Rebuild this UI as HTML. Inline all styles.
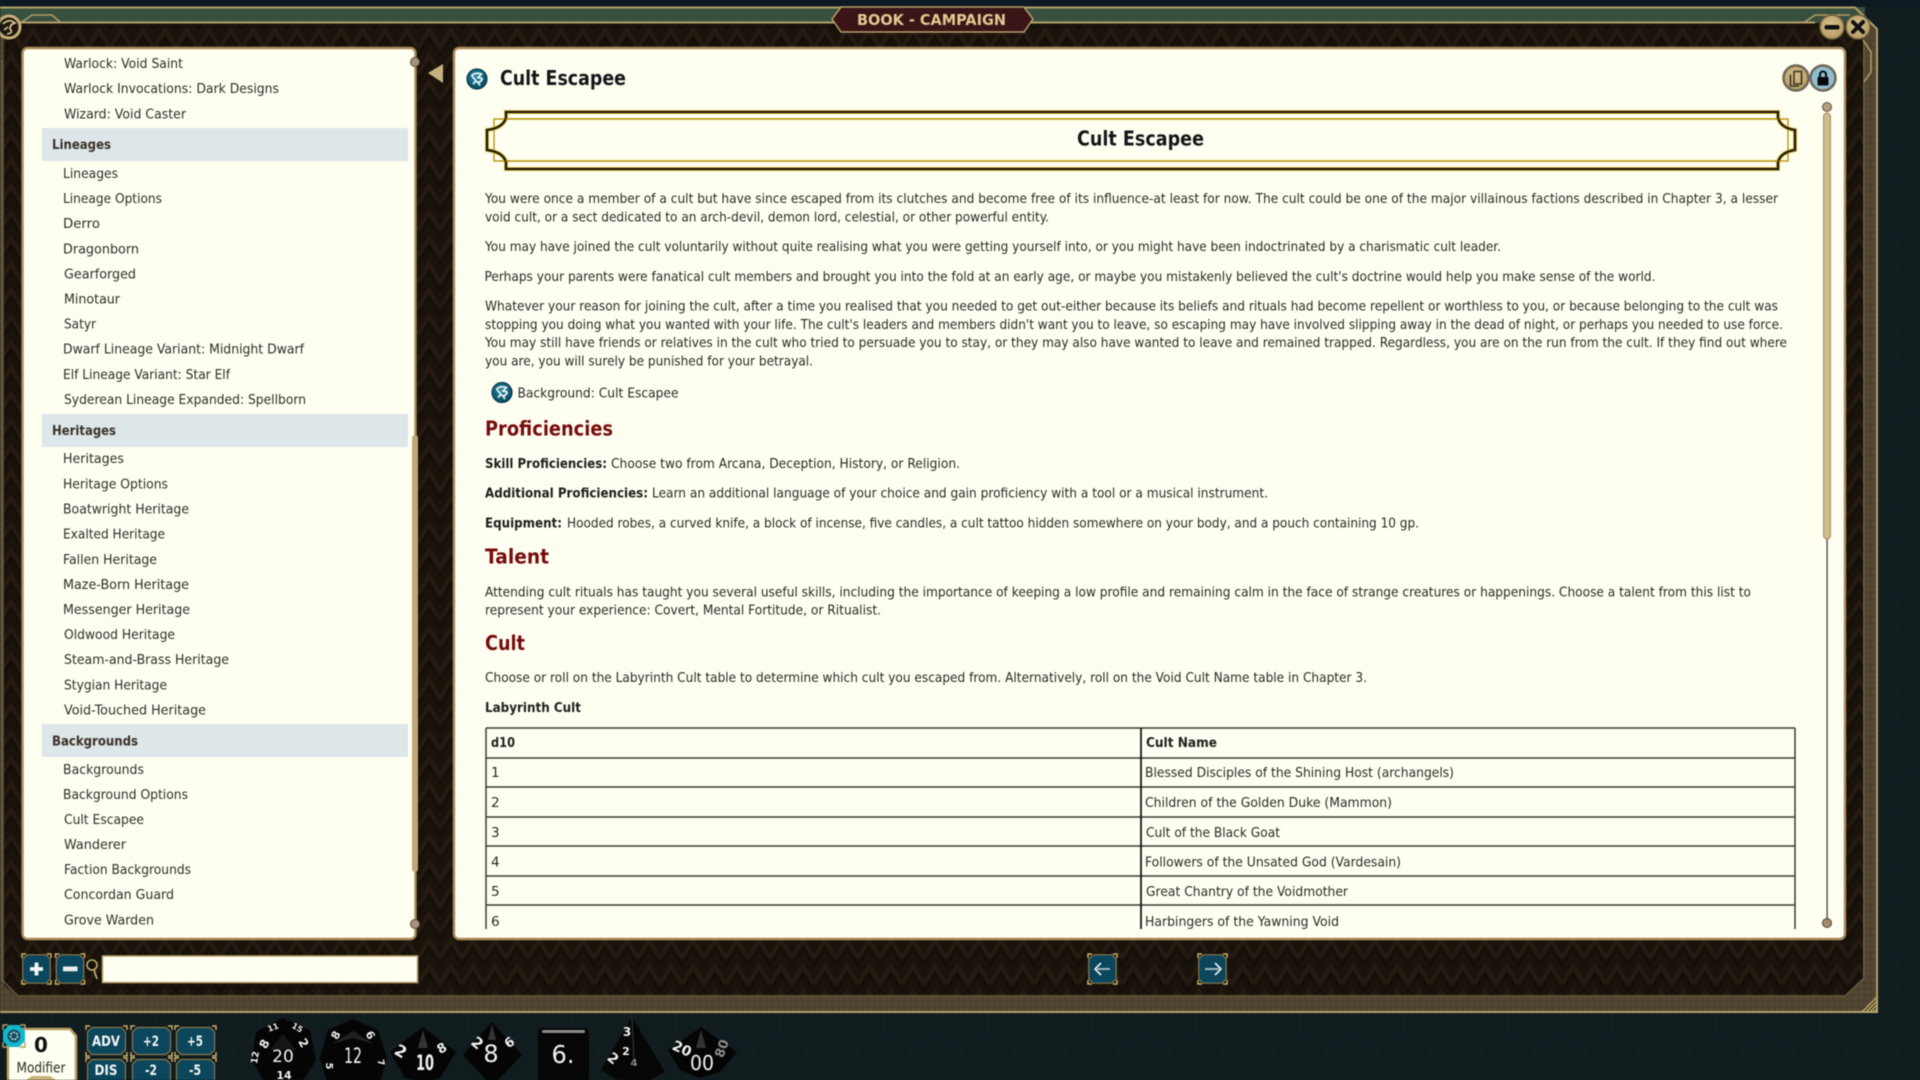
<!DOCTYPE html>
<html><head><meta charset="utf-8"><title>Book - Campaign</title>
<style>
html,body{margin:0;padding:0;background:#111c1f;width:1920px;height:1080px;overflow:hidden}
svg{display:block;filter:blur(.42px)}
text{font-family:"DejaVu Sans","Liberation Sans",sans-serif}
.i{font-size:13.7px;fill:#2f2d29}
.h{font-size:13.7px;font-weight:bold;fill:#3a3028}
.p{font-size:13.6px;fill:#2a2a26}
.b{font-size:13.6px;font-weight:bold;fill:#1e1e1c}
.r{font-size:20px;font-weight:bold;fill:#760c0c}
.w{font-weight:bold;fill:#f4f6f4;font-size:14px;text-anchor:middle}
.d{fill:#f2f2f2;text-anchor:middle;font-weight:bold}
</style></head><body>
<svg width="1920" height="1080" viewBox="0 0 1920 1080" xmlns="http://www.w3.org/2000/svg">
<defs>
<pattern id="hex" width="52" height="90" patternUnits="userSpaceOnUse">
<path d="M0 15L26 0L52 15V45L26 60V90M26 60L0 45V15M52 45L26 60" fill="none" stroke="#16222a" stroke-opacity=".7" stroke-width="1.1"/>
</pattern>
<pattern id="herr" width="22" height="26" patternUnits="userSpaceOnUse">
<rect width="22" height="26" fill="#19130c"/>
<path d="M0 22L11 4L22 22" fill="none" stroke="#241a10" stroke-width="4"/>
<path d="M0 30L11 12L22 30M0 4L11 -14L22 4" fill="none" stroke="#140f09" stroke-width="3"/>
</pattern>
<pattern id="tan" width="6" height="6" patternUnits="userSpaceOnUse">
<rect width="6" height="6" fill="#4e4430"/>
<circle cx="1.5" cy="2" r="1" fill="#5c5139"/><circle cx="4.5" cy="5" r="1" fill="#453b29"/>
</pattern>
<radialGradient id="teal" cx=".45" cy=".4" r=".6"><stop offset="0" stop-color="#2a8fa8"/><stop offset="1" stop-color="#07465c"/></radialGradient>
<radialGradient id="gold" cx=".45" cy=".4" r=".6"><stop offset="0" stop-color="#d4bf8c"/><stop offset="1" stop-color="#b89d63"/></radialGradient>
<g id="b29">
<path d="M5 1H24L28 5V25L24 29H5L1 25V5Z" fill="#0b465c"/>
<path d="M5 .8H24L28.2 5V25L24 29.2H5L.8 25V5Z" fill="none" stroke="#8a7a4e" stroke-width="1.2"/>
<path d="M0 4V0H4M25 0H29V4M29 26V30H25M4 30H0V26" fill="none" stroke="#cdb26c" stroke-width="1.5"/>
</g>
<g id="b41">
<path d="M6 1.5H35L39.5 6V24L35 28.5H6L1.5 24V6Z" fill="#0b465c" stroke="#8a7a4e" stroke-width="1.2"/>
<path d="M0 4V0H4M37 0H41V4M41 26V30H37M4 30H0V26" fill="none" stroke="#cdb26c" stroke-width="1.4"/>
</g>
<g id="logo">
<circle r="10" fill="url(#teal)"/><circle r="10" fill="none" stroke="#0a3d50" stroke-width="1.2"/>
<path d="M-5.5 -3.5Q-1 -7 4.5 -5L1 -1.5L5.5 -0.5M-5.5 -3.5L-1 2L-4 5M5.5 -0.5Q4 3 1 3.5L3 6.5M-1 2L1 3.5" fill="none" stroke="#eef5f6" stroke-width="1.7"/>
</g>
<clipPath id="tclip"><rect x="470" y="700" width="1340" height="229"/></clipPath>
</defs>

<rect width="1920" height="1080" fill="#111c1f"/>
<rect width="1920" height="1080" fill="url(#hex)"/>
<rect width="1920" height="7" fill="#0d1a22"/>

<!-- window frame -->
<path d="M0 7H1855L1877 29V1012H0Z" fill="url(#tan)"/>
<rect x="0" y="7" width="1865" height="16" fill="#38503f"/>
<path d="M0 23H1855L1863 36V980L1845 997H18L4 985V23Z" fill="url(#herr)"/>
<path d="M0 7.5H1855L1877 29V1012H0" fill="none" stroke="#b49f68" stroke-width="2"/>
<path d="M0 22.5H1815" fill="none" stroke="#b49f68" stroke-width="2"/>
<path d="M2 60V980L18 996H1845L1864 978V40" fill="none" stroke="#6d5f3e" stroke-width="1.5"/>
<path d="M1863 40L1871 52V72L1864 82" fill="none" stroke="#b49f68" stroke-width="1.5"/>
<path d="M1805 22L1815 15H1850" fill="none" stroke="#b49f68" stroke-width="1.5"/>
<path d="M22 22L32 15H52L60 22" fill="none" stroke="#b49f68" stroke-width="1.5"/>
<path d="M1862 1012L1877 997M1866 1012L1877 1001M1870 1012L1877 1005M1874 1012L1877 1009" stroke="#c0a868" stroke-width="1.4"/>

<!-- title tab -->
<path d="M841 7H1024L1033 19L1024 32H841L832 19Z" fill="#3a1417" stroke="#b49f68" stroke-width="1.5"/>
<text x="857" y="25" font-size="15.5" font-weight="bold" fill="#e3c890" textLength="149" lengthAdjust="spacingAndGlyphs">BOOK - CAMPAIGN</text>

<!-- window knobs -->
<circle cx="9" cy="27" r="11" fill="#1d1710" stroke="#c6ae78" stroke-width="3"/>
<path d="M3 24Q9 18 15 23Q10 24 10 29Q14 33 7 34M4 30L8 27" fill="none" stroke="#d8c490" stroke-width="1.7"/>
<circle cx="1832" cy="27" r="12" fill="url(#gold)" stroke="#6e5f3c" stroke-width="1.5"/>
<rect x="1824.5" y="25" width="15" height="4.5" rx="2" fill="#111"/>
<circle cx="1858" cy="27" r="12" fill="url(#gold)" stroke="#6e5f3c" stroke-width="1.5"/>
<path d="M1853 22L1863 32M1863 22L1853 32" stroke="#111" stroke-width="4" stroke-linecap="round"/>

<!-- left panel -->
<rect x="22.5" y="48" width="393" height="891" rx="5" fill="#fffff1" stroke="#a98c5c" stroke-width="2.4"/>
<rect x="42" y="128" width="366" height="33" fill="#dde6e8"/>
<rect x="42" y="414" width="366" height="33" fill="#dde6e8"/>
<rect x="42" y="724" width="366" height="33" fill="#dde6e8"/>
<rect x="412" y="435" width="6" height="437" rx="3" fill="#bfa777"/>
<circle cx="415" cy="62" r="4.5" fill="#a7937c" stroke="#5a4c38"/>
<circle cx="415" cy="924" r="4.5" fill="#a7937c" stroke="#5a4c38"/>
<path d="M428 73L443 64V83Z" fill="#c6b27f"/>

<g class="list">
<text class="i" x="64" y="68" textLength="119" lengthAdjust="spacingAndGlyphs">Warlock: Void Saint</text>
<text class="i" x="64" y="93" textLength="215" lengthAdjust="spacingAndGlyphs">Warlock Invocations: Dark Designs</text>
<text class="i" x="64" y="118.5" textLength="122" lengthAdjust="spacingAndGlyphs">Wizard: Void Caster</text>
<text class="h" x="52" y="149" textLength="59" lengthAdjust="spacingAndGlyphs">Lineages</text>
<text class="i" x="63" y="178" textLength="55" lengthAdjust="spacingAndGlyphs">Lineages</text>
<text class="i" x="63" y="203" textLength="99" lengthAdjust="spacingAndGlyphs">Lineage Options</text>
<text class="i" x="63" y="228" textLength="37" lengthAdjust="spacingAndGlyphs">Derro</text>
<text class="i" x="63" y="253.5" textLength="76" lengthAdjust="spacingAndGlyphs">Dragonborn</text>
<text class="i" x="64" y="278.5" textLength="72" lengthAdjust="spacingAndGlyphs">Gearforged</text>
<text class="i" x="64" y="303.5" textLength="56" lengthAdjust="spacingAndGlyphs">Minotaur</text>
<text class="i" x="64" y="328.5" textLength="32" lengthAdjust="spacingAndGlyphs">Satyr</text>
<text class="i" x="63" y="353.5" textLength="241" lengthAdjust="spacingAndGlyphs">Dwarf Lineage Variant: Midnight Dwarf</text>
<text class="i" x="63" y="379" textLength="167" lengthAdjust="spacingAndGlyphs">Elf Lineage Variant: Star Elf</text>
<text class="i" x="64" y="404" textLength="242" lengthAdjust="spacingAndGlyphs">Syderean Lineage Expanded: Spellborn</text>
<text class="h" x="52" y="435" textLength="64" lengthAdjust="spacingAndGlyphs">Heritages</text>
<text class="i" x="63" y="463" textLength="61" lengthAdjust="spacingAndGlyphs">Heritages</text>
<text class="i" x="63" y="488.5" textLength="105" lengthAdjust="spacingAndGlyphs">Heritage Options</text>
<text class="i" x="63" y="513.5" textLength="126" lengthAdjust="spacingAndGlyphs">Boatwright Heritage</text>
<text class="i" x="63" y="538.5" textLength="102" lengthAdjust="spacingAndGlyphs">Exalted Heritage</text>
<text class="i" x="63" y="564" textLength="94" lengthAdjust="spacingAndGlyphs">Fallen Heritage</text>
<text class="i" x="63" y="589" textLength="126" lengthAdjust="spacingAndGlyphs">Maze-Born Heritage</text>
<text class="i" x="63" y="614" textLength="127" lengthAdjust="spacingAndGlyphs">Messenger Heritage</text>
<text class="i" x="64" y="639" textLength="111" lengthAdjust="spacingAndGlyphs">Oldwood Heritage</text>
<text class="i" x="64" y="664" textLength="165" lengthAdjust="spacingAndGlyphs">Steam-and-Brass Heritage</text>
<text class="i" x="64" y="689.5" textLength="103" lengthAdjust="spacingAndGlyphs">Stygian Heritage</text>
<text class="i" x="64" y="714.5" textLength="142" lengthAdjust="spacingAndGlyphs">Void-Touched Heritage</text>
<text class="h" x="52" y="745.5" textLength="86" lengthAdjust="spacingAndGlyphs">Backgrounds</text>
<text class="i" x="63" y="774" textLength="81" lengthAdjust="spacingAndGlyphs">Backgrounds</text>
<text class="i" x="63" y="799" textLength="125" lengthAdjust="spacingAndGlyphs">Background Options</text>
<text class="i" x="64" y="824" textLength="80" lengthAdjust="spacingAndGlyphs">Cult Escapee</text>
<text class="i" x="64" y="849" textLength="62" lengthAdjust="spacingAndGlyphs">Wanderer</text>
<text class="i" x="64" y="874" textLength="127" lengthAdjust="spacingAndGlyphs">Faction Backgrounds</text>
<text class="i" x="64" y="899" textLength="110" lengthAdjust="spacingAndGlyphs">Concordan Guard</text>
<text class="i" x="64" y="924.5" textLength="90" lengthAdjust="spacingAndGlyphs">Grove Warden</text>
</g>

<!-- right panel -->
<rect x="454" y="48" width="1391" height="891" rx="5" fill="#fffff1" stroke="#a98c5c" stroke-width="2.4"/>
<use href="#logo" transform="translate(477,79)"/>
<text x="500" y="85" font-size="20" font-weight="bold" fill="#16161a" textLength="126" lengthAdjust="spacingAndGlyphs">Cult Escapee</text>

<circle cx="1796" cy="78" r="12.5" fill="url(#gold)" stroke="#6f6656" stroke-width="2.5"/>
<path d="M1794 71.5H1801.5V84H1794ZM1790.5 74.5V86H1799" fill="none" stroke="#3a3426" stroke-width="1.6"/>
<circle cx="1823" cy="78" r="12.5" fill="#8fbdd2" stroke="#6f6656" stroke-width="2.5"/>
<rect x="1817.5" y="77" width="11" height="8.5" rx="1" fill="#0a0a0a"/>
<path d="M1820 77V74.5A3 3 0 0 1 1826 74.5V77" fill="none" stroke="#0a0a0a" stroke-width="2"/>

<!-- content scrollbar -->
<rect x="1826.4" y="113" width="1.4" height="806" fill="#55504a"/>
<rect x="1823.5" y="113" width="7" height="426" rx="3.5" fill="#d2bb8c" stroke="#a98c5c"/>
<circle cx="1827" cy="107" r="4.5" fill="#b49d80" stroke="#5a5048"/>
<circle cx="1827" cy="923" r="4.5" fill="#a58a6c" stroke="#4a4038"/>

<!-- banner -->
<rect x="494" y="119" width="1294" height="42" fill="none" stroke="#b8940e" stroke-width="1.4"/>
<path d="M506 112H1778V118Q1781 128 1795 130V150Q1781 152 1778 162V169H506V162Q503 152 487 150V130Q503 128 506 118Z" fill="none" stroke="#c2a010" stroke-width="3.8"/>
<path d="M506 112H1778V118Q1781 128 1795 130V150Q1781 152 1778 162V169H506V162Q503 152 487 150V130Q503 128 506 118Z" fill="none" stroke="#191612" stroke-width="2"/>
<rect x="509" y="119" width="1266" height="42" fill="#fffff1" stroke="none"/>
<path d="M506 119H1778M506 161H1778" stroke="#b8940e" stroke-width="1.6"/>
<text x="1077" y="145.5" font-size="20" font-weight="bold" fill="#16161a" textLength="127" lengthAdjust="spacingAndGlyphs">Cult Escapee</text>

<!-- paragraphs -->
<text class="p" x="485" y="203" textLength="1293" lengthAdjust="spacingAndGlyphs">You were once a member of a cult but have since escaped from its clutches and become free of its influence-at least for now. The cult could be one of the major villainous factions described in Chapter 3, a lesser</text>
<text class="p" x="485" y="221.5" textLength="564" lengthAdjust="spacingAndGlyphs">void cult, or a sect dedicated to an arch-devil, demon lord, celestial, or other powerful entity.</text>
<text class="p" x="485" y="251" textLength="1016" lengthAdjust="spacingAndGlyphs">You may have joined the cult voluntarily without quite realising what you were getting yourself into, or you might have been indoctrinated by a charismatic cult leader.</text>
<text class="p" x="484.5" y="281" textLength="1171" lengthAdjust="spacingAndGlyphs">Perhaps your parents were fanatical cult members and brought you into the fold at an early age, or maybe you mistakenly believed the cult's doctrine would help you make sense of the world.</text>
<text class="p" x="485" y="310.5" textLength="1293" lengthAdjust="spacingAndGlyphs">Whatever your reason for joining the cult, after a time you realised that you needed to get out-either because its beliefs and rituals had become repellent or worthless to you, or because belonging to the cult was</text>
<text class="p" x="485" y="329" textLength="1298" lengthAdjust="spacingAndGlyphs">stopping you doing what you wanted with your life. The cult's leaders and members didn't want you to leave, so escaping may have involved slipping away in the dead of night, or perhaps you needed to use force.</text>
<text class="p" x="485" y="347" textLength="1302" lengthAdjust="spacingAndGlyphs">You may still have friends or relatives in the cult who tried to persuade you to stay, or they may also have wanted to leave and remained trapped. Regardless, you are on the run from the cult. If they find out where</text>
<text class="p" x="485" y="365.5" textLength="328" lengthAdjust="spacingAndGlyphs">you are, you will surely be punished for your betrayal.</text>

<use href="#logo" transform="translate(502,392.5)"/>
<text class="p" x="517.5" y="397.5" textLength="161" lengthAdjust="spacingAndGlyphs">Background: Cult Escapee</text>

<text class="r" x="485" y="435.5" textLength="128" lengthAdjust="spacingAndGlyphs">Proficiencies</text>
<text class="b" x="485" y="468" textLength="122" lengthAdjust="spacingAndGlyphs">Skill Proficiencies:</text>
<text class="p" x="611" y="468" textLength="349" lengthAdjust="spacingAndGlyphs">Choose two from Arcana, Deception, History, or Religion.</text>
<text class="b" x="485" y="497.5" textLength="163" lengthAdjust="spacingAndGlyphs">Additional Proficiencies:</text>
<text class="p" x="652" y="497.5" textLength="616" lengthAdjust="spacingAndGlyphs">Learn an additional language of your choice and gain proficiency with a tool or a musical instrument.</text>
<text class="b" x="485" y="527.5" textLength="77" lengthAdjust="spacingAndGlyphs">Equipment:</text>
<text class="p" x="567" y="527.5" textLength="852" lengthAdjust="spacingAndGlyphs">Hooded robes, a curved knife, a block of incense, five candles, a cult tattoo hidden somewhere on your body, and a pouch containing 10 gp.</text>
<text class="r" x="485" y="563.5" textLength="64" lengthAdjust="spacingAndGlyphs">Talent</text>
<text class="p" x="485" y="596.5" textLength="1266" lengthAdjust="spacingAndGlyphs">Attending cult rituals has taught you several useful skills, including the importance of keeping a low profile and remaining calm in the face of strange creatures or happenings. Choose a talent from this list to</text>
<text class="p" x="485" y="614.5" textLength="396" lengthAdjust="spacingAndGlyphs">represent your experience: Covert, Mental Fortitude, or Ritualist.</text>
<text class="r" x="485" y="650" textLength="40" lengthAdjust="spacingAndGlyphs">Cult</text>
<text class="p" x="485" y="682" textLength="882" lengthAdjust="spacingAndGlyphs">Choose or roll on the Labyrinth Cult table to determine which cult you escaped from. Alternatively, roll on the Void Cult Name table in Chapter 3.</text>
<text class="b" x="485" y="712" textLength="96" lengthAdjust="spacingAndGlyphs">Labyrinth Cult</text>

<!-- table -->
<g clip-path="url(#tclip)">
<path d="M486 728H1795M486 758H1795M486 787H1795M486 817H1795M486 846H1795M486 876H1795M486 905H1795" stroke="#3c3a34" stroke-width="1.6"/>
<path d="M486 728V929M1795 728V929" stroke="#3c3a34" stroke-width="1.5"/>
<path d="M1141 728V929" stroke="#1a1a18" stroke-width="1.8"/>
</g>
<text class="b" x="491" y="747" textLength="24" lengthAdjust="spacingAndGlyphs">d10</text>
<text class="b" x="1146" y="747" textLength="71" lengthAdjust="spacingAndGlyphs">Cult Name</text>
<text class="p" x="491" y="777">1</text>
<text class="p" x="491" y="807">2</text>
<text class="p" x="491" y="837">3</text>
<text class="p" x="491" y="866.5">4</text>
<text class="p" x="491" y="896">5</text>
<text class="p" x="491" y="926">6</text>
<text class="p" x="1145" y="777" textLength="309" lengthAdjust="spacingAndGlyphs">Blessed Disciples of the Shining Host (archangels)</text>
<text class="p" x="1145" y="807" textLength="247" lengthAdjust="spacingAndGlyphs">Children of the Golden Duke (Mammon)</text>
<text class="p" x="1146" y="837" textLength="134" lengthAdjust="spacingAndGlyphs">Cult of the Black Goat</text>
<text class="p" x="1145" y="866.5" textLength="256" lengthAdjust="spacingAndGlyphs">Followers of the Unsated God (Vardesain)</text>
<text class="p" x="1146" y="896" textLength="202" lengthAdjust="spacingAndGlyphs">Great Chantry of the Voidmother</text>
<text class="p" x="1145" y="926" textLength="194" lengthAdjust="spacingAndGlyphs">Harbingers of the Yawning Void</text>

<!-- bottom of window -->
<use href="#b29" transform="translate(22,954)"/>
<path d="M30 969H43M36.5 962.5V975.5" stroke="#f4f6f4" stroke-width="3.8"/>
<use href="#b29" transform="translate(55.5,954)"/>
<rect x="63" y="966.5" width="14.5" height="4.8" fill="#e8eeee"/>
<circle cx="92" cy="965" r="5" fill="none" stroke="#bfa763" stroke-width="1.6"/>
<path d="M94 970L97 979" stroke="#bfa763" stroke-width="1.8"/>
<rect x="102.5" y="956" width="315" height="26.5" fill="#fffff1" stroke="#bba26c" stroke-width="1.5"/>

<use href="#b29" transform="translate(1088,954)"/>
<path d="M1110 969H1097" stroke="#9fb6bc" stroke-width="2"/><path d="M1101 963L1095 969L1101 975" fill="none" stroke="#e4ecec" stroke-width="1.7"/>
<use href="#b29" transform="translate(1198,954)"/>
<path d="M1205 969H1219" stroke="#9fb6bc" stroke-width="2"/><path d="M1215 963L1221 969L1215 975" fill="none" stroke="#e4ecec" stroke-width="1.7"/>

<!-- modifier -->
<path d="M16 1029H70L76 1036V1085H8V1037Z" fill="#fffff1" stroke="#b89f63" stroke-width="2.5"/>
<text x="41" y="1052" font-size="20" font-weight="bold" fill="#111" text-anchor="middle">0</text>
<text x="41" y="1072.5" font-size="14" fill="#2a2a26" text-anchor="middle" textLength="49" lengthAdjust="spacingAndGlyphs">Modifier</text>
<path d="M26 1080L32 1076H50L56 1080Z" fill="#c9b27c"/>
<path d="M3 1030V1025H8M20 1025H25V1030M25 1042V1047H20M8 1047H3V1042" fill="none" stroke="#b89f63" stroke-width="1.4"/>
<path d="M9 1025H19L25 1031V1041L19 1047H9L3 1041V1031Z" fill="#12b6cc"/>
<circle cx="14" cy="1036" r="6.5" fill="#14505f"/>
<circle cx="14" cy="1036" r="3.6" fill="none" stroke="#c8dfe2" stroke-width="1.6" stroke-dasharray="2 1.2"/>

<!-- modifier buttons -->
<use href="#b41" transform="translate(86,1026)"/><text class="w" x="106" y="1046" textLength="28" lengthAdjust="spacingAndGlyphs">ADV</text>
<use href="#b41" transform="translate(131,1026)"/><text class="w" x="151" y="1046" font-size="13" textLength="16" lengthAdjust="spacingAndGlyphs">+2</text>
<use href="#b41" transform="translate(175,1026)"/><text class="w" x="195" y="1046" textLength="16" lengthAdjust="spacingAndGlyphs">+5</text>
<use href="#b41" transform="translate(86,1058)"/><text class="w" x="106" y="1075" textLength="23" lengthAdjust="spacingAndGlyphs">DIS</text>
<use href="#b41" transform="translate(131,1058)"/><text class="w" x="151" y="1075" textLength="12" lengthAdjust="spacingAndGlyphs">-2</text>
<use href="#b41" transform="translate(175,1058)"/><text class="w" x="195" y="1075" textLength="12" lengthAdjust="spacingAndGlyphs">-5</text>

<!-- dice -->
<path d="M283 1018L310 1030L316 1060L302 1082H264L252 1060L256 1032Z" fill="#050505"/>
<path d="M283 1034L270 1050H296Z" fill="#161616"/>
<text class="d" x="283" y="1062" font-size="17" font-weight="normal" style="font-weight:normal">20</text>
<text class="d" font-size="12" transform="translate(268,1046) rotate(-60)">8</text>
<text class="d" font-size="12" transform="translate(300,1045) rotate(60)">2</text>
<text class="d" font-size="8" transform="translate(274,1030) rotate(-20)">11</text>
<text class="d" font-size="8" transform="translate(296,1030) rotate(30)">15</text>
<text class="d" font-size="9" fill="#9a9a9a" transform="translate(258,1058) rotate(-80)">12</text>
<text class="d" font-size="11" transform="translate(284,1079)">14</text>

<path d="M353 1019L378 1030L387 1058L380 1082H327L320 1058L328 1030Z" fill="#050505"/>
<path d="M353 1031L332 1044L353 1038L374 1044Z" fill="#202020"/>
<text class="d" x="353" y="1063" font-size="21" style="font-weight:normal" textLength="18" lengthAdjust="spacingAndGlyphs">12</text>
<text class="d" font-size="11" transform="translate(339,1037) rotate(-60)">8</text>
<text class="d" font-size="11" transform="translate(367,1037) rotate(60)">6</text>
<text class="d" font-size="10" fill="#aaa" transform="translate(326,1066) rotate(90)">5</text>
<text class="d" font-size="9" fill="#888" transform="translate(378,1063) rotate(80)">7</text>

<path d="M423 1027L456 1052L440 1078L423 1082L405 1078L390 1052Z" fill="#050505"/>
<path d="M423 1030L418 1048L428 1048Z" fill="#333"/>
<text class="d" x="425" y="1070" font-size="21" textLength="18" lengthAdjust="spacingAndGlyphs">10</text>
<text class="d" font-size="16" transform="translate(398,1056) rotate(30)">2</text>
<text class="d" font-size="13" fill="#aaa" transform="translate(444,1052) rotate(-30)">8</text>

<path d="M492 1022L522 1055L496 1082H488L463 1055Z" fill="#050505"/>
<path d="M492 1024L488 1040L496 1040Z" fill="#333"/>
<text class="d" x="491" y="1062" font-size="24" style="font-weight:normal">8</text>
<text class="d" font-size="15" transform="translate(474,1047) rotate(40)">2</text>
<text class="d" font-size="13" fill="#aaa" transform="translate(512,1046) rotate(-35)">6</text>

<rect x="538" y="1028" width="51" height="54" rx="5" fill="#060606"/>
<rect x="542" y="1030" width="43" height="3" rx="1.5" fill="#8a8a8a"/>
<text class="d" x="563" y="1063" font-size="25" style="font-weight:normal" textLength="23" lengthAdjust="spacingAndGlyphs">6.</text>

<path d="M632 1017L665 1072L650 1080H618L601 1070Z" fill="#060606"/>
<path d="M632 1017L634 1062" stroke="#2a2a2a" stroke-width="1.5"/>
<text class="d" font-size="12" transform="translate(627,1036)">3</text>
<text class="d" font-size="11" transform="translate(626,1055)">2</text>
<text class="d" font-size="14" transform="translate(610,1062) rotate(40)">2</text>
<text class="d" font-size="10" style="fill:#888" x="634" y="1066">4</text>

<path d="M701 1027L737 1052L720 1072L700 1078L680 1070L668 1050Z" fill="#050505"/>
<path d="M701 1030L696 1048L706 1048Z" fill="#333"/>
<text class="d" x="702" y="1070" font-size="20" style="font-weight:normal" textLength="24" lengthAdjust="spacingAndGlyphs">00</text>
<text class="d" font-size="14" transform="translate(680,1053) rotate(25)">20</text>
<text class="d" font-size="13" style="fill:#8d8d8d" transform="translate(726,1050) rotate(-70)">80</text>
</svg>
</body></html>
